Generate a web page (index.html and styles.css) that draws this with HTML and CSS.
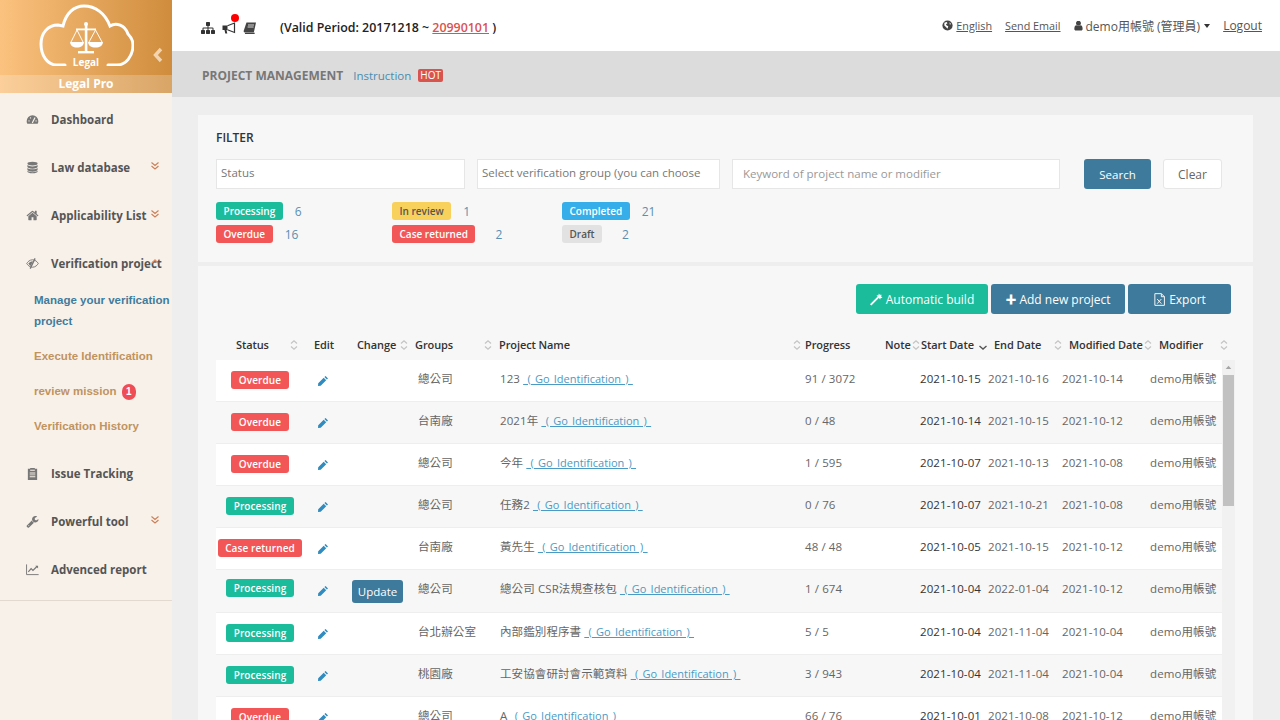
FILE: index.html
```html
<!DOCTYPE html>
<html lang="zh-Hant">
<head>
<meta charset="utf-8">
<title>Project Management</title>
<link rel="stylesheet" href="styles.css">
</head>
<body>
<svg class="defs" width="0" height="0" aria-hidden="true">
  <symbol id="i-pencil" viewBox="0 0 12 12"><path d="M8.6 1 11 3.400 9.900 4.600 7.400 2.100ZM6.700 2.800 9.200 5.300 3.700 10.800 1 11 1.200 8.300Z"/></symbol>
  <symbol id="i-sort" viewBox="0 0 10 12"><path d="M2 4.500 5 1.800 8 4.500M2 7.500 5 10.200 8 7.500" fill="none" stroke="#c4c4c4" stroke-width="1.200"/></symbol>
  <symbol id="i-down" viewBox="0 0 10 12"><path d="M1.500 7 5 10 8.500 7" fill="none" stroke="#555" stroke-width="1.400"/></symbol>
  <symbol id="i-dbl" viewBox="0 0 10 10"><path d="M1.500 1.500 5 4.500 8.500 1.500M1.500 5 5 8 8.500 5" fill="none" stroke="currentColor" stroke-width="1.100"/></symbol>
</svg>
<div class="app">
  <aside class="sidebar">
    <div class="brand">
      <div class="brand-top">
        <svg class="cloud" viewBox="0 0 96 62" width="96" height="62">
          <path d="M27 61H19C9 61 3 51 3 40 3 29 10 21 20 21L25 22C28 9 36 2 46 2 57 2 67 9 72 22 78 18 87 21 90 30 93 33 95 37 95 41 95 52 88 61 79 61H70" fill="none" stroke="#fff" stroke-width="3" stroke-linecap="round"/>
          <g fill="#fff">
            <rect x="46.800" y="20" width="2.600" height="28"/>
            <rect x="40" y="47" width="16" height="2.400"/>
            <rect x="38" y="24.500" width="20" height="1.800"/>
            <path d="M32 38H46C45.500 42 43 43.500 39 43.500S32.500 42 32 38ZM50 38H65C64.500 42 62 43.500 57.500 43.500S50.500 42 50 38Z"/>
            <circle cx="48" cy="20" r="2"/>
          </g>
          <path d="M39 26 33 38M39 26 45 38M57.500 26 51 38M57.500 26 64 38" stroke="#fff" stroke-width="1" fill="none"/>
        </svg>
        <span class="logo-word">Legal</span>
        <svg class="collapse" viewBox="0 0 10 16" width="10" height="16"><path d="M8 2 2.500 8 8 14" fill="none" stroke="#f3d4ae" stroke-width="3.400"/></svg>
      </div>
      <div class="brand-strip">Legal Pro</div>
    </div>
    <nav class="nav">
      <div class="nav-item">
        <svg class="nav-icon" viewBox="0 0 14 14"><path d="M7 2.500A6.300 6.300 0 0 0 .7 8.800c0 1 .2 1.900.7 2.700h11.200c.5-.8.700-1.700.7-2.700A6.300 6.300 0 0 0 7 2.500Z"/><path d="M7 10.300 9.500 5.300M3.200 8.500h.1M4.800 5.300h.1M10.800 8.500h.1" stroke="#f8f1e9" stroke-width="1.300" stroke-linecap="round"/></svg>
        <span>Dashboard</span>
      </div>
      <div class="nav-item">
        <svg class="nav-icon" viewBox="0 0 14 14"><ellipse cx="7" cy="2.800" rx="5.500" ry="2"/><path d="M1.500 4.300v2c0 1.100 2.500 2 5.500 2s5.500-.9 5.500-2v-2c-.8 1-3 1.500-5.500 1.500s-4.700-.5-5.500-1.500ZM1.500 7.500v2c0 1.100 2.500 2 5.500 2s5.500-.9 5.500-2v-2c-.8 1-3 1.500-5.500 1.500S2.300 8.500 1.500 7.500ZM1.500 10.600v.7c0 1.100 2.500 2 5.500 2s5.500-.9 5.500-2v-.7c-.8 1-3 1.500-5.500 1.500s-4.700-.5-5.500-1.500Z"/></svg>
        <span>Law database</span>
        <svg class="nav-more" viewBox="0 0 10 10"><use href="#i-dbl"/></svg>
      </div>
      <div class="nav-item">
        <svg class="nav-icon" viewBox="0 0 1792 1792"><path d="M1472 992v480q0 26-19 45t-45 19h-384v-384h-256v384h-384q-26 0-45-19t-19-45v-480q0-1 .5-3t.5-3l575-474 575 474q1 2 1 6zm223-69l-62 74q-8 9-21 11h-3q-13 0-21-7l-692-577-692 577q-12 8-24 7-13-2-21-11l-62-74q-8-10-7-23.500t11-21.500l719-599q32-26 76-26t76 26l244 204v-195q0-14 9-23t23-9h192q14 0 23 9t9 23v408l219 182q10 8 11 21.500t-7 23.500z"/></svg>
        <span>Applicability List</span>
        <svg class="nav-more" viewBox="0 0 10 10"><use href="#i-dbl"/></svg>
      </div>
      <div class="nav-item">
        <svg class="nav-icon" viewBox="0 0 14 14"><path d="M7 3C4 3 1.800 5.200.8 7c1 1.800 3.200 4 6.200 4s5.200-2.200 6.200-4C12.200 5.200 10 3 7 3Z" fill="none" stroke="#777" stroke-width="1"/><path d="M9.800 1.500 4.500 12.500" stroke="#777" stroke-width="1.400"/><path d="M7.500 4.500 5 9.800C3.800 9 3 8 2.500 7 3.500 5.700 5.200 4.500 7.500 4.500Z"/></svg>
        <span>Verification project</span>
        <svg class="nav-more nav-more-up" viewBox="0 0 10 10"><path d="M2 5 5 2 8 5" fill="none" stroke="currentColor" stroke-width="1.300"/></svg>
      </div>
      <div class="sub-list">
        <a class="sub-item sub-active">Manage your verification project</a>
        <a class="sub-item">Execute Identification</a>
        <a class="sub-item">review mission <span class="count-dot">1</span></a>
        <a class="sub-item">Verification History</a>
      </div>
      <div class="nav-item">
        <svg class="nav-icon" viewBox="0 0 14 14"><path d="M2 2h2.500V1h5v1H12v12H2Zm2.500 1v1h5V3ZM4 6v1h6V6Zm0 2v1h6V8Zm0 2v1h6v-1Z" fill-rule="evenodd"/></svg>
        <span>Issue Tracking</span>
      </div>
      <div class="nav-item">
        <svg class="nav-icon" viewBox="0 0 1792 1792"><path d="M448 1472q0-26-19-45t-45-19-45 19-19 45 19 45 45 19 45-19 19-45zm644-420l-682 682q-37 37-90 37-52 0-91-37l-106-108q-38-36-38-90 0-53 38-91l681-681q39 98 114.500 173.500t173.500 114.500zm634-435q0 39-23 106-47 134-164.500 217.500t-258.500 83.500q-185 0-316.500-131.500t-131.500-316.500 131.500-316.500 316.500-131.500q58 0 121.500 16.500t107.500 46.500q16 11 16 28t-16 28l-293 169v224l193 107q5-3 79-48.500t135.500-81 70.500-35.500q15 0 23.500 10t8.500 25z"/></svg>
        <span>Powerful tool</span>
        <svg class="nav-more" viewBox="0 0 10 10"><use href="#i-dbl"/></svg>
      </div>
      <div class="nav-item">
        <svg class="nav-icon" viewBox="0 0 14 14"><path d="M.6 1.500v11h13" fill="none" stroke="#777" stroke-width="1"/><path d="M2.500 9.500 5.500 6l2 2 4.500-4.500" fill="none" stroke="#777" stroke-width="1.300"/><path d="M10 3h3v3Z"/></svg>
        <span>Advenced report</span>
      </div>
    </nav>
  </aside>

  <main class="main">
    <header class="topbar">
      <div class="tool-icons">
        <svg class="tool" viewBox="0 0 1792 1792"><path d="M1792 1248v320q0 40-28 68t-68 28h-320q-40 0-68-28t-28-68v-320q0-40 28-68t68-28h96v-192h-512v192h96q40 0 68 28t28 68v320q0 40-28 68t-68 28h-320q-40 0-68-28t-28-68v-320q0-40 28-68t68-28h96v-192h-512v192h96q40 0 68 28t28 68v320q0 40-28 68t-68 28h-320q-40 0-68-28t-28-68v-320q0-40 28-68t68-28h96v-192q0-52 38-90t90-38h512v-192h-96q-40 0-68-28t-28-68v-320q0-40 28-68t68-28h320q40 0 68 28t28 68v320q0 40-28 68t-68 28h-96v192h512q52 0 90 38t38 90v192h96q40 0 68 28t28 68z"/></svg>
        <span class="tool-wrap">
          <svg class="tool" viewBox="0 0 14 14"><path d="M.5 4.500H5.500V9H4.500L5.300 12.500H3.300L2.500 9H.5Z"/><path d="M5.500 4.700 12.500 2V11.500L5.500 8.800" fill="none" stroke="#333" stroke-width="1.200"/></svg>
          <span class="red-dot"></span>
        </span>
        <svg class="tool tool-book" viewBox="0 0 14 14"><path d="M3.500 1.500H13L10.800 11.500H1.800C.8 11.500.5 10.500.8 9.500Z"/><path d="M2 13h9.500l.4-1.200H2.500C1.900 11.800 1.800 12.600 2 13Z"/><path d="M5 4h6M4.600 6h6" stroke="#fff" stroke-width=".8"/></svg>
      </div>
      <div class="validity">(Valid Period: 20171218 ~ <a class="valid-date">20990101</a> )</div>
      <div class="top-links">
        <span class="top-link">
          <svg class="globe" viewBox="0 0 14 14"><circle cx="7" cy="7" r="6.500"/><path d="M3 3.500 6 2.500 7 4 5 5.500 6 7 8 8 7 11 5 9 3 7ZM9.500 3l2 2-1.500 1Z" fill="#fff"/></svg>
          <a>English</a>
        </span>
        <a class="top-link">Send Email</a>
        <span class="user">
          <svg class="user-icon" viewBox="200 200 1400 1500"><path d="M1536 1399q0 109-62.500 187t-150.500 78h-854q-88 0-150.500-78t-62.500-187q0-85 8.500-160.500t31.500-152 58.500-131 94-89 134.500-34.500q131 128 313 128t313-128q76 0 134.500 34.500t94 89 58.500 131 31.500 152 8.500 160.500zm-256-887q0 159-112.500 271.500t-271.500 112.500-271.500-112.500-112.500-271.500 112.500-271.500 271.500-112.500 271.500 112.500 112.500 271.500z"/></svg>
          demo用帳號 (管理員)
          <i class="caret"></i>
        </span>
        <a class="logout">Logout</a>
      </div>
    </header>
    <div class="titlebar">
      <strong class="title">PROJECT MANAGEMENT</strong>
      <a class="instruction">Instruction</a>
      <span class="hot">HOT</span>
    </div>
    <div class="content">
      <section class="card filter">
        <h2 class="filter-title">FILTER</h2>
        <div class="filter-row">
          <div class="field field-status">Status</div>
          <div class="field field-group">Select verification group (you can choose</div>
          <div class="field field-key">Keyword of project name or modifier</div>
          <button class="btn btn-blue btn-search">Search</button>
          <button class="btn btn-white">Clear</button>
        </div>
        <div class="legend">
          <div class="legend-item"><span class="badge green">Processing</span><a class="num">6</a></div>
          <div class="legend-item"><span class="badge yellow">In review</span><a class="num">1</a></div>
          <div class="legend-item"><span class="badge blue">Completed</span><a class="num">21</a></div>
          <div class="legend-item"><span class="badge red">Overdue</span><a class="num">16</a></div>
          <div class="legend-item"><span class="badge red">Case returned</span><a class="num num-wide">2</a></div>
          <div class="legend-item"><span class="badge gray">Draft</span><a class="num num-wide">2</a></div>
        </div>
      </section>

      <section class="card projects">
        <div class="actions">
          <button class="btn btn-green btn-auto">
            <svg class="btn-icon" viewBox="0 0 14 14"><path d="M1.500 13.500 0 12 8 4 9.500 5.500ZM9.500 .5l1 1.500 2-.2-.5 2 1.500 1.200-2 .3-.5 1.700-1.400-1.500L7.500 5.800 8.300 4 7 2.500l2 .1Z" fill="#fff"/></svg>
            Automatic build
          </button>
          <button class="btn btn-blue btn-add"><span class="plus">✚</span> Add new project</button>
          <button class="btn btn-blue btn-export">
            <svg class="btn-icon" viewBox="0 0 14 14"><path d="M2 .7h7l3.300 3.300v9.300H2Z M9 .7V4h3.300" fill="none" stroke="#fff"/><path d="M4.500 6.500 9 11.500M9 6.500 4.500 11.500" stroke="#fff"/></svg>
            Export
          </button>
        </div>
        <div class="thead">
          <div class="th"><span>Status</span><svg class="sort"><use href="#i-sort"/></svg></div>
          <div class="th"><span>Edit</span></div>
          <div class="th"><span>Change</span><svg class="sort"><use href="#i-sort"/></svg></div>
          <div class="th"><span>Groups</span><svg class="sort"><use href="#i-sort"/></svg></div>
          <div class="th"><span>Project Name</span><svg class="sort"><use href="#i-sort"/></svg></div>
          <div class="th"><span>Progress</span></div>
          <div class="th"><span>Note</span><svg class="sort"><use href="#i-sort"/></svg></div>
          <div class="th"><span>Start Date</span><svg class="sort"><use href="#i-down"/></svg></div>
          <div class="th"><span>End Date</span><svg class="sort"><use href="#i-sort"/></svg></div>
          <div class="th"><span>Modified Date</span><svg class="sort"><use href="#i-sort"/></svg></div>
          <div class="th"><span>Modifier</span><svg class="sort"><use href="#i-sort"/></svg></div>
        </div>
        <div class="tbody-wrap">
          <div class="tbody">
            <div class="tr">
              <div class="td td-status"><span class="badge red">Overdue</span></div>
              <div class="td td-edit"><svg class="pencil"><use href="#i-pencil"/></svg></div>
              <div class="td td-change"></div>
              <div class="td">總公司</div>
              <div class="td">123 <a class="go">&nbsp;(&nbsp;Go Identification&nbsp;)&nbsp;</a></div>
              <div class="td">91 / 3072</div>
              <div class="td"></div>
              <div class="td td-strong">2021-10-15</div>
              <div class="td">2021-10-16</div>
              <div class="td">2021-10-14</div>
              <div class="td">demo用帳號</div>
            </div>
            <div class="tr">
              <div class="td td-status"><span class="badge red">Overdue</span></div>
              <div class="td td-edit"><svg class="pencil"><use href="#i-pencil"/></svg></div>
              <div class="td td-change"></div>
              <div class="td">台南廠</div>
              <div class="td">2021年 <a class="go">&nbsp;(&nbsp;Go Identification&nbsp;)&nbsp;</a></div>
              <div class="td">0 / 48</div>
              <div class="td"></div>
              <div class="td td-strong">2021-10-14</div>
              <div class="td">2021-10-15</div>
              <div class="td">2021-10-12</div>
              <div class="td">demo用帳號</div>
            </div>
            <div class="tr">
              <div class="td td-status"><span class="badge red">Overdue</span></div>
              <div class="td td-edit"><svg class="pencil"><use href="#i-pencil"/></svg></div>
              <div class="td td-change"></div>
              <div class="td">總公司</div>
              <div class="td">今年 <a class="go">&nbsp;(&nbsp;Go Identification&nbsp;)&nbsp;</a></div>
              <div class="td">1 / 595</div>
              <div class="td"></div>
              <div class="td td-strong">2021-10-07</div>
              <div class="td">2021-10-13</div>
              <div class="td">2021-10-08</div>
              <div class="td">demo用帳號</div>
            </div>
            <div class="tr">
              <div class="td td-status"><span class="badge green">Processing</span></div>
              <div class="td td-edit"><svg class="pencil"><use href="#i-pencil"/></svg></div>
              <div class="td td-change"></div>
              <div class="td">總公司</div>
              <div class="td">任務2 <a class="go">&nbsp;(&nbsp;Go Identification&nbsp;)&nbsp;</a></div>
              <div class="td">0 / 76</div>
              <div class="td"></div>
              <div class="td td-strong">2021-10-07</div>
              <div class="td">2021-10-21</div>
              <div class="td">2021-10-08</div>
              <div class="td">demo用帳號</div>
            </div>
            <div class="tr">
              <div class="td td-status"><span class="badge red">Case returned</span></div>
              <div class="td td-edit"><svg class="pencil"><use href="#i-pencil"/></svg></div>
              <div class="td td-change"></div>
              <div class="td">台南廠</div>
              <div class="td">黃先生 <a class="go">&nbsp;(&nbsp;Go Identification&nbsp;)&nbsp;</a></div>
              <div class="td">48 / 48</div>
              <div class="td"></div>
              <div class="td td-strong">2021-10-05</div>
              <div class="td">2021-10-15</div>
              <div class="td">2021-10-12</div>
              <div class="td">demo用帳號</div>
            </div>
            <div class="tr tr-tall">
              <div class="td td-status"><span class="badge green">Processing</span></div>
              <div class="td td-edit"><svg class="pencil"><use href="#i-pencil"/></svg></div>
              <div class="td td-change"><button class="btn btn-blue btn-update">Update</button></div>
              <div class="td">總公司</div>
              <div class="td">總公司 CSR法規查核包 <a class="go">&nbsp;(&nbsp;Go Identification&nbsp;)&nbsp;</a></div>
              <div class="td">1 / 674</div>
              <div class="td"></div>
              <div class="td td-strong">2021-10-04</div>
              <div class="td">2022-01-04</div>
              <div class="td">2021-10-12</div>
              <div class="td">demo用帳號</div>
            </div>
            <div class="tr">
              <div class="td td-status"><span class="badge green">Processing</span></div>
              <div class="td td-edit"><svg class="pencil"><use href="#i-pencil"/></svg></div>
              <div class="td td-change"></div>
              <div class="td">台北辦公室</div>
              <div class="td">內部鑑別程序書 <a class="go">&nbsp;(&nbsp;Go Identification&nbsp;)&nbsp;</a></div>
              <div class="td">5 / 5</div>
              <div class="td"></div>
              <div class="td td-strong">2021-10-04</div>
              <div class="td">2021-11-04</div>
              <div class="td">2021-10-04</div>
              <div class="td">demo用帳號</div>
            </div>
            <div class="tr">
              <div class="td td-status"><span class="badge green">Processing</span></div>
              <div class="td td-edit"><svg class="pencil"><use href="#i-pencil"/></svg></div>
              <div class="td td-change"></div>
              <div class="td">桃園廠</div>
              <div class="td">工安協會研討會示範資料 <a class="go">&nbsp;(&nbsp;Go Identification&nbsp;)&nbsp;</a></div>
              <div class="td">3 / 943</div>
              <div class="td"></div>
              <div class="td td-strong">2021-10-04</div>
              <div class="td">2021-11-04</div>
              <div class="td">2021-10-04</div>
              <div class="td">demo用帳號</div>
            </div>
            <div class="tr">
              <div class="td td-status"><span class="badge red">Overdue</span></div>
              <div class="td td-edit"><svg class="pencil"><use href="#i-pencil"/></svg></div>
              <div class="td td-change"></div>
              <div class="td">總公司</div>
              <div class="td">A <a class="go">&nbsp;(&nbsp;Go Identification&nbsp;)&nbsp;</a></div>
              <div class="td">66 / 76</div>
              <div class="td"></div>
              <div class="td td-strong">2021-10-01</div>
              <div class="td">2021-10-08</div>
              <div class="td">2021-10-12</div>
              <div class="td">demo用帳號</div>
            </div>
          </div>
          <div class="scrollbar">
            <svg class="scroll-arrow" viewBox="0 0 14 15"><path d="M4 9 7 5.500 10 9Z" fill="#a5a5a5"/></svg>
            <div class="scroll-thumb"></div>
          </div>
        </div>
      </section>
    </div>
  </main>
</div>
</body>
</html>
```
FILE: styles.css
```css
* { box-sizing: border-box; }
html, body { margin: 0; height: 720px; overflow: hidden; }
body {
  font-family: "Open Sans", "Noto Sans CJK TC", sans-serif;
  font-size: 12px;
  color: #666;
  background: #eee;
}
a { cursor: pointer; }
.defs { position: absolute; }
.app { display: flex; height: 720px; }

/* sidebar */
.sidebar { width: 172px; flex: none; background: #f8f1e9; color: #555; }
.brand { height: 93px; background: linear-gradient(90deg, #fbc27f, #cf8c3c); }
.brand-top { position: relative; height: 75px; display: flex; justify-content: center; padding-top: 4px; }
.cloud { display: block; }
.logo-word { position: absolute; top: 55px; left: 0; width: 172px; text-align: center; color: #fff; font-weight: 700; font-size: 10px; line-height: 14px; }
.collapse { position: absolute; left: 153px; top: 47px; }
.brand-strip { height: 18px; line-height: 18px; text-align: center; color: #fff; font-weight: 700; font-size: 12px; background: rgba(255,255,255,.22); }
.nav { padding: 2px 0 7px; border-bottom: 1px solid #e2d9cf; }
.nav-item { display: flex; align-items: center; height: 48px; padding-left: 26px; font-weight: 700; font-size: 11.500px; color: #555; position: relative; }
.nav-icon { width: 13px; height: 13px; margin-right: 12px; fill: #777; flex: none; }
.nav-more { position: absolute; left: 150px; top: 18px; width: 10px; height: 10px; color: #c9805a; }
.nav-more-up { top: 19px; color: #e08a60; }
.sub-list { margin: -4px 0 5px; }
.sub-item { display: block; padding: 7px 0 7px 34px; font-family: "Liberation Sans", Arial, sans-serif; font-weight: 700; font-size: 11.500px; line-height: 21px; color: #c0935f; }
.sub-active { color: #3f7c9d; }
.count-dot { display: inline-block; width: 14px; height: 16px; margin-left: 2px; border-radius: 7px; background: #ef4d56; color: #fff; font-size: 10px; line-height: 16px; text-align: center; }

/* top */
.main { flex: 1; min-width: 0; display: flex; flex-direction: column; }
.topbar { height: 51px; flex: none; background: #fff; display: flex; align-items: center; padding: 0 18px 0 29px; }
.tool-icons { display: flex; align-items: center; gap: 7px; color: #333; margin-top: 4px; }
.tool { display: block; width: 14px; height: 14px; fill: #333; }
.tool-book { fill: #444; }
.tool-wrap { position: relative; display: block; }
.red-dot { position: absolute; left: 9px; top: -7px; width: 8px; height: 8px; border-radius: 50%; background: #f00; }
.validity { margin: 4px 0 0 23px; font-weight: 600; font-size: 12.400px; color: #222; white-space: nowrap; }
.valid-date { color: #d9534f; text-decoration: underline; }
.top-links { margin-left: auto; display: flex; align-items: center; color: #555; font-size: 12px; white-space: nowrap; }
.top-link { font-size: 10.800px; text-decoration: underline; margin-right: 13px; display: flex; align-items: center; }
.globe { width: 11px; height: 11px; fill: #444; margin-right: 3px; }
.user { display: flex; align-items: center; margin-right: 13px; color: #555; gap: 3px; }
.user-icon { width: 9px; height: 10px; fill: #444; }
.caret { width: 0; height: 0; border: 3.500px solid transparent; border-top: 4px solid #333; border-bottom: 0; margin-left: 1px; }
.logout { font-size: 12px; text-decoration: underline; }
.titlebar { height: 46px; flex: none; background: #dcdcdc; display: flex; align-items: center; padding: 2px 0 0 30px; }
.title { font-weight: 700; font-size: 12px; color: #777; }
.instruction { margin-left: 10px; color: #4a8db0; font-size: 11.500px; }
.hot { margin-left: 7px; padding: 0 2px; background: #d9534f; color: #fff; border-radius: 2px; font-size: 10px; line-height: 13px; }

/* content */
.content { flex: 1; min-height: 0; overflow: hidden; padding: 18px 27px 0 26px; display: flex; flex-direction: column; gap: 4px; }
.card { background: #f7f7f7; }
.filter { height: 147px; flex: none; padding: 14px 31px 0 18px; }
.filter-title { margin: 0 0 13px; font-size: 12px; line-height: 17px; font-weight: 600; color: #333; }
.filter-row { display: flex; align-items: stretch; height: 30px; }
.field { background: #fff; border: 1px solid #e6e6e6; padding: 0 4px; font-size: 11.500px; line-height: 25px; color: #777; white-space: nowrap; overflow: hidden; }
.field-status { width: 249px; }
.field-group { width: 243px; margin-left: 12px; }
.field-key { width: 328px; margin-left: 12px; padding-left: 10px; color: #999; line-height: 27px; }
.btn { font-family: inherit; font-size: 12px; border: 0; border-radius: 3px; color: #fff; display: flex; align-items: center; justify-content: center; gap: 3px; padding: 0; }
.btn-blue { background: #3e7a9b; }
.btn-green { background: #1abc9c; }
.btn-white { width: 59px; margin-left: 12px; background: #fff; border: 1px solid #e6e6e6; color: #666; }
.btn-search { width: 67px; margin-left: 24px; font-size: 11.500px; }
.legend { display: grid; grid-template-columns: 176px 170px 1fr; row-gap: 5px; margin-top: 13px; }
.legend-item { display: flex; align-items: center; height: 18px; }
.badge { display: inline-block; height: 18px; line-height: 18px; padding: 0 7.500px; border-radius: 3px; font-size: 10px; font-weight: 600; color: #fff; white-space: nowrap; }
.green { background: #1abc9c; }
.red { background: #f25656; }
.yellow { background: #f8d05c; color: #555; }
.blue { background: #35aee9; }
.gray { background: #e2e2e2; color: #555; }
.num { margin-left: 12px; color: #5a8fb0; }
.num-wide { margin-left: 20px; }

/* table */
.projects { flex: 1; min-height: 0; padding: 18px 22px 0 18px; display: flex; flex-direction: column; }
.actions { display: flex; justify-content: flex-end; gap: 3px; height: 30px; flex: none; }
.btn-auto { width: 132px; }
.btn-add { width: 134px; }
.btn-export { width: 103px; }
.btn-icon { width: 13px; height: 13px; }
.plus { font-size: 11px; line-height: 1; }
.thead { display: grid; grid-template-columns: 84px 50px 61px 84px 309px 77px 39px 70px 75px 90px 76px; height: 46px; flex: none; align-items: end; padding-bottom: 8px; }
.th { display: flex; justify-content: space-between; align-items: center; padding-left: 4px; padding-right: 2px; font-weight: 600; font-size: 11px; letter-spacing: -.1px; color: #333; white-space: nowrap; }
.sort { width: 10px; height: 12px; flex: none; }
.thead .th:nth-child(1) { padding-left: 20px; padding-right: 1px; }
.thead .th:nth-child(2) { padding-left: 14px; }
.thead .th:nth-child(3) { padding-left: 7px; }
.thead .th:nth-child(6) { padding-left: 1px; }
.thead .th:nth-child(7) { padding-right: 4px; }
.thead .th:nth-child(8) { padding-left: 1px; }
.tbody-wrap { display: flex; flex: 1; min-height: 0; margin-right: -4px; }
.tbody { width: 1006px; flex: none; overflow: hidden; }
.tr { display: grid; grid-template-columns: 88px 38px 71px 82px 305px 85px 30px 70px 73px 88px 76px; align-items: center; height: 42px; background: #fff; border-bottom: 1px solid #eee; white-space: nowrap; }
.tr:nth-child(even) { background: #f7f7f7; }
.tr-tall { height: 43px; }
.tr-tall .td-status { padding-bottom: 4px; }
.tr-tall .td { padding-bottom: 6px; }
.tr-tall .td-change { padding: 0; }
.tr-tall .td-edit { padding: 0; }
.td { padding: 0 0 5px 5px; font-size: 11.500px; color: #666; letter-spacing: .1px; }
.td:nth-child(9) { padding-left: 3px; }
.td:nth-child(10) { padding-left: 4px; }
.td:nth-child(11) { padding-left: 4px; }
.td-status { padding: 0 0 2px; text-align: center; display: flex; justify-content: center; }
.td-edit { padding: 1px 0 0; display: flex; justify-content: center; }
.td-change { padding: 0; display: flex; justify-content: center; }
.td-strong { color: #333; }
.pencil { width: 12px; height: 12px; fill: #2f8bc0; }
.go { color: #4a9ac4; text-decoration: underline; font-size: 11px; word-spacing: 1.400px; letter-spacing: 0; }
.btn-update { width: 51px; height: 23px; font-size: 11.500px; }
.scrollbar { width: 13px; flex: none; background: #f1f1f1; display: flex; flex-direction: column; align-items: center; }
.scroll-arrow { display: block; width: 13px; height: 15px; flex: none; }
.scroll-thumb { width: 11px; height: 131px; background: #c1c1c1; }
```
